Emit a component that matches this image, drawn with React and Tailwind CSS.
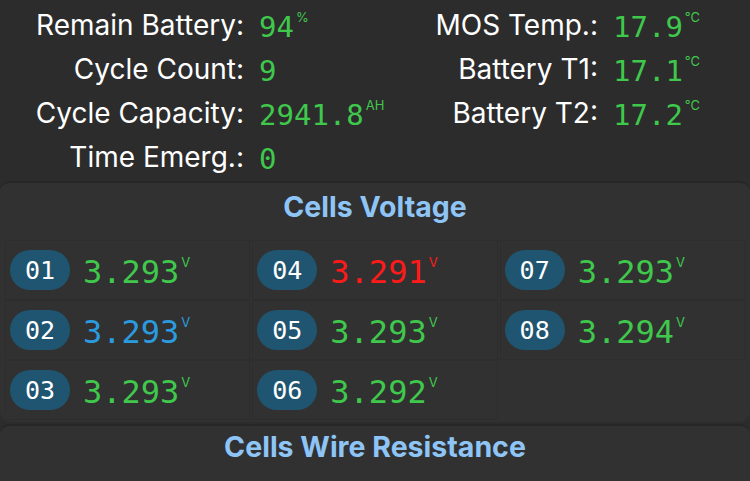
import React from "react";

const sans = { fontFamily: "Inter, 'Liberation Sans', sans-serif" };

function Val({ v, unit, color = "text-[#3fc84c]", size = "text-[29px]", up = "-mt-[2px]" }) {
  return (
    <span className={`flex items-start whitespace-nowrap ${color}`}>
      <span className={`${size} leading-none font-['DejaVu_Sans_Mono',monospace]`}>{v}</span>
      {unit && (
        <span className={`text-[13px] leading-none ml-[2px] ${up} font-['Inter','Liberation_Sans',sans-serif]`}>{unit}</span>
      )}
    </span>
  );
}

function Row({ label, children, labelW }) {
  return (
    <div className="flex items-center h-[44px]">
      <div className={`${labelW} shrink-0 whitespace-nowrap text-right text-white text-[28px] leading-none`} style={sans}>{label}</div>
      <div className="ml-[15px] pt-[4px] shrink-0">{children}</div>
    </div>
  );
}

function Cell({ n, v, color }) {
  return (
    <div className="h-[60px] flex items-center border border-[#2d2d2d] bg-[#313131]">
      <div className="ml-[4px] w-[60px] h-[40px] rounded-full bg-[#1f5571] flex items-center justify-center text-white text-[25px] leading-none font-['DejaVu_Sans_Mono',monospace]">
        {n}
      </div>
      <div className="ml-[13px] pt-[3px]">
        <Val v={v} unit="V" color={color} size="text-[32px]" up="mt-0" />
      </div>
    </div>
  );
}

export default function App() {
  const green = "text-[#3fc84c]";
  const cells = [
    ["01", "3.293", green],
    ["04", "3.291", "text-[#ff1a1a]"],
    ["07", "3.293", green],
    ["02", "3.293", "text-[#2b9be0]"],
    ["05", "3.293", green],
    ["08", "3.294", green],
    ["03", "3.293", green],
    ["06", "3.292", green],
  ];
  return (
    <div className="w-[750px] h-[481px] bg-[#2c2c2c] overflow-hidden">
      <div className="flex pt-[3px] h-[180px]">
        <div className="w-[375px]">
          <Row label="Remain Battery:" labelW="w-[244px]"><Val v="94" unit="%" /></Row>
          <Row label="Cycle Count:" labelW="w-[244px]"><Val v="9" /></Row>
          <Row label="Cycle Capacity:" labelW="w-[244px]"><Val v="2941.8" unit="AH" /></Row>
          <Row label="Time Emerg.:" labelW="w-[244px]"><Val v="0" /></Row>
        </div>
        <div className="w-[375px]">
          <Row label="MOS Temp.:" labelW="w-[223px]"><Val v="17.9" unit="°C" /></Row>
          <Row label="Battery T1:" labelW="w-[223px]"><Val v="17.1" unit="°C" /></Row>
          <Row label="Battery T2:" labelW="w-[223px]"><Val v="17.2" unit="°C" /></Row>
        </div>
      </div>
      <div className="mt-[1px] rounded-[10px] border-t-2 border-[#262626] bg-[#313131] pb-[2px]">
        <div className="h-[57px] pb-[8px] flex items-center justify-center text-[#8ec5f6] text-[28.5px] font-bold leading-none" style={sans}>
          Cells Voltage
        </div>
        <div className="grid grid-cols-3 gap-x-[2px] px-[5px]">
          {cells.map(([n, v, c]) => (
            <Cell key={n} n={n} v={v} color={c} />
          ))}
        </div>
      </div>
      <div className="mt-[2px] rounded-[10px] border-t-2 border-[#262626] bg-[#313131] h-[80px]">
        <div className="h-[42px] flex items-center justify-center text-[#8ec5f6] text-[28.5px] font-bold leading-none" style={sans}>
          Cells Wire Resistance
        </div>
      </div>
    </div>
  );
}
